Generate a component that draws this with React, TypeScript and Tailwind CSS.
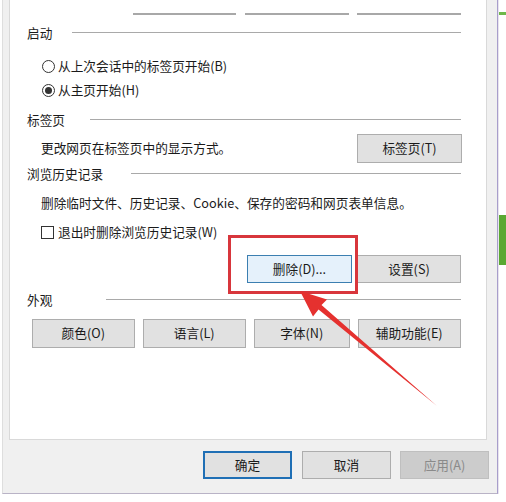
import React from "react"

function Btn({
  label,
  className = "",
}: {
  label: string
  className?: string
}) {
  return (
    <div
      className={`flex items-center justify-center border border-[#adadad] bg-[#e1e1e1] text-[12.7px] text-[#1a1a1a] ${className}`}
    >
      {label}
    </div>
  )
}

function Heading({ title, gap }: { title: string; gap: string }) {
  return (
    <div className="flex items-center">
      <span className="text-[#1a1a1a]">{title}</span>
      <div className={`flex-1 border-t border-[#a9a9a9] ${gap}`} />
    </div>
  )
}

function Radio({ label, checked }: { label: string; checked?: boolean }) {
  return (
    <div className="flex items-center pl-[15px] h-[24px]">
      <span className="w-[13px] h-[13px] rounded-full border border-[#333] bg-white flex items-center justify-center">
        {checked && <span className="w-[7px] h-[7px] rounded-full bg-[#333]" />}
      </span>
      <span className="ml-[3px]">{label}</span>
    </div>
  )
}

export default function App() {
  return (
    <div className="relative w-[506px] h-[502px] bg-white overflow-hidden flex items-start font-['Noto_Sans_CJK_SC',sans-serif] text-[12.7px] text-[#1a1a1a] leading-none">
      {/* dialog window */}
      <div className="ml-[2px] w-[496px] h-[494px] flex flex-col bg-[#f0f0f0] border-l border-[#dedede] border-r border-r-[#a89ecb] border-b border-b-[#b9b3c6]">
        <div className="ml-[6px] w-[478px] h-[440px] bg-white border-x border-b border-[#d9d9d9] pl-[17px] pr-[25px] flex flex-col">
          {/* cut-off buttons of the tab above */}
          <div className="h-[16px] flex items-end pb-[1px] -ml-[17px]">
            <div className="ml-[123px] w-[103px] h-[2px] bg-[#a8a8a8]" />
            <div className="ml-[9px] w-[104px] h-[2px] bg-[#a8a8a8]" />
            <div className="ml-[8px] w-[104px] h-[2px] bg-[#a8a8a8]" />
          </div>

          <div className="h-[34px] flex flex-col justify-center">
            <Heading title="启动" gap="ml-[20px]" />
          </div>
          <div className="mt-[4px]">
            <Radio label="从上次会话中的标签页开始(B)" />
            <Radio label="从主页开始(H)" checked />
          </div>

          <div className="mt-[6px] h-[24px] flex flex-col justify-center">
            <Heading title="标签页" gap="ml-[25px]" />
          </div>
          <div className="mt-[1px] h-[30px] flex items-center">
            <span className="pl-[14px]">更改网页在标签页中的显示方式。</span>
            <Btn label="标签页(T)" className="ml-auto w-[105px] h-[29px] -mr-[1px]" />
          </div>

          <div className="h-[22px] flex flex-col justify-center">
            <Heading title="浏览历史记录" gap="ml-[28px]" />
          </div>
          <div className="mt-[6px] h-[24px] flex items-center pl-[14px]">
            删除临时文件、历史记录、Cookie、保存的密码和网页表单信息。
          </div>
          <div className="mt-[5px] h-[24px] flex items-center pl-[14px]">
            <span className="w-[13px] h-[13px] border border-[#333] bg-white" />
            <span className="ml-[4px]">退出时删除浏览历史记录(W)</span>
          </div>
          <div className="mt-[11px] h-[28px] flex justify-end gap-[5px]">
            <Btn
              label="删除(D)..."
              className="w-[105px] h-[28px] !bg-[#e5f1fb] !border-[#3c7fb1]"
            />
            <Btn label="设置(S)" className="w-[104px] h-[28px]" />
          </div>

          <div className="mt-[5px] h-[24px] flex flex-col justify-center">
            <Heading title="外观" gap="ml-[54px]" />
          </div>
          <div className="mt-[7px] h-[29px] flex pl-[5px]">
            <Btn label="颜色(O)" className="w-[103px] h-[29px]" />
            <Btn label="语言(L)" className="ml-[8px] w-[104px] h-[29px]" />
            <Btn label="字体(N)" className="ml-[8px] w-[96px] h-[29px]" />
            <Btn label="辅助功能(E)" className="ml-[8px] w-[104px] h-[29px]" />
          </div>
        </div>

        {/* footer buttons */}
        <div className="flex-1 flex items-start pt-[11px] pl-[200px]">
          <Btn
            label="确定"
            className="w-[89px] h-[28px] !border-2 !border-[#1f6fb5]"
          />
          <Btn label="取消" className="ml-[10px] w-[89px] h-[28px]" />
          <Btn
            label="应用(A)"
            className="ml-[9px] w-[89px] h-[28px] !bg-[#cccccc] !border-[#bfbfbf] !text-[#8a8a8a]"
          />
        </div>
      </div>

      {/* page behind the dialog */}
      <div className="flex-1 h-[494px] flex flex-col border-l border-[#e8e4ee]">
        <div className="mt-[12px] h-[3px] bg-[#6fb84a]" />
        <div className="mt-[200px] h-[50px] bg-[#5aa832]" />
      </div>

      {/* annotation: red box and arrow */}
      <div className="absolute left-[228px] top-[235px] w-[130px] h-[59px] border-[3px] border-[#d8363c]" />
      <svg
        className="absolute left-0 top-0"
        width="506"
        height="502"
        viewBox="0 0 506 502"
      >
        <polygon
          points="300,291 327,299.5 321.5,305 437,406 318.5,309.5 313,316.5"
          fill="#e5312f"
        />
      </svg>
    </div>
  )
}
